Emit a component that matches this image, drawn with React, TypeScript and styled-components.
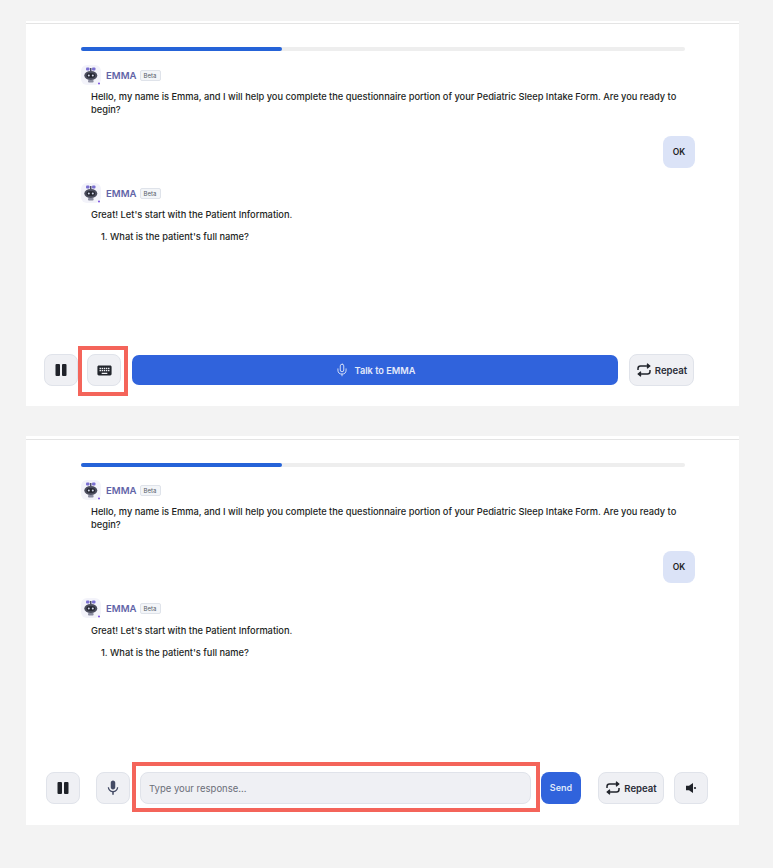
import styled, { createGlobalStyle } from 'styled-components';
import { Mic } from 'lucide-react';
import { MdKeyboard, MdMic } from 'react-icons/md';

const GlobalStyle = createGlobalStyle`
    html, body {
        margin: 0;
        padding: 0;
        background: #f3f3f3;
        font-family: Inter, "Open Sans", sans-serif;
    }
`;
const Page = styled.div`
    width: 773px;
    height: 868px;
    padding: 21px 34px 0 26px;
    box-sizing: border-box;
    display: flex;
    flex-direction: column;
    gap: 30px;
`;
const Panel = styled.section<{ $height: number; $lineTop: number }>`
    height: ${(props) => props.$height}px;
    background: #ffffff;
    padding-top: ${(props) => props.$lineTop}px;
    box-sizing: border-box;
    display: flex;
    flex-direction: column;
    &::before {
        content: '';
        display: block;
        height: 1px;
        background: #e4e4e4;
        flex: none;
    }
`;
const Track = styled.div`
    margin: 23px 54px 0 55px;
    height: 4px;
    border-radius: 2px;
    background: #eeeeee;
    flex: none;
`;
const Fill = styled.div`
    width: 201px;
    height: 100%;
    border-radius: 2px;
    background: #2563d8;
`;
const Chat = styled.div<{ $top: number }>`
    flex: 1;
    padding: ${(props) => props.$top}px 44px 0 55px;
`;
const Head = styled.div`
    display: flex;
    align-items: center;
    height: 20px;
`;
const Name = styled.span`
    margin-left: 5px;
    font-size: 9.6px;
    font-weight: 600;
    color: #6264a7;
`;
const Badge = styled.span`
    margin-left: 3px;
    height: 11px;
    width: 21px;
    box-sizing: border-box;
    border: 1px solid #dfe3ea;
    border-radius: 2px;
    background: #f3f5f8;
    font-size: 6px;
    line-height: 9px;
    text-align: center;
    color: #555b68;
`;
const Text = styled.p<{ $mt?: number }>`
    margin: ${(props) => props.$mt || 5}px 0 0 10px;
    width: 600px;
    font-size: 9.28px;
    line-height: 13px;
    font-weight: 500;
    color: #1d1f24;
`;
const ListText = styled(Text)`
    margin: 9px 0 0 20px;
`;
const BubbleRow = styled.div`
    display: flex;
    justify-content: flex-end;
    margin: 20px 0 15px;
`;
const Bubble = styled.div`
    width: 32px;
    height: 32px;
    border-radius: 8px;
    background: #dbe3f7;
    font-size: 8.5px;
    font-weight: 600;
    line-height: 32px;
    text-align: center;
    color: #1d1f24;
`;
const Bar = styled.div<{ $left: number; $bottom: number }>`
    flex: none;
    height: 50px;
    margin-bottom: ${(props) => props.$bottom}px;
    padding-left: ${(props) => props.$left}px;
    display: flex;
    align-items: center;
`;
const IconButton = styled.div<{ $ml?: number }>`
    flex: none;
    width: 34px;
    height: 32px;
    margin-left: ${(props) => props.$ml || 0}px;
    box-sizing: border-box;
    border: 1px solid #e0e3ea;
    border-radius: 8px;
    background: #eff0f4;
    display: flex;
    align-items: center;
    justify-content: center;
    color: #22252c;
`;
// the red annotation box sits 1px off the row centre, $shift moves it without moving its content
const Highlight = styled.div<{ $width: number; $ml: number; $pad: number; $shift: number }>`
    flex: none;
    width: ${(props) => props.$width}px;
    height: 50px;
    margin-left: ${(props) => props.$ml}px;
    margin-top: ${(props) => (props.$shift > 0 ? 2 : 0)}px;
    margin-bottom: ${(props) => (props.$shift < 0 ? 2 : 0)}px;
    padding-left: ${(props) => props.$pad}px;
    padding-top: ${(props) => (props.$shift < 0 ? 2 : 0)}px;
    padding-bottom: ${(props) => (props.$shift > 0 ? 2 : 0)}px;
    box-sizing: border-box;
    border: 4px solid #f4645a;
    display: flex;
    align-items: center;
`;
const TalkButton = styled.div`
    flex: none;
    width: 486px;
    height: 30px;
    margin-left: 4px;
    border-radius: 7px;
    background: #3063dc;
    display: flex;
    align-items: center;
    justify-content: center;
    gap: 6px;
    font-size: 9.2px;
    font-weight: 600;
    color: #e4eafa;
`;
const RepeatButton = styled.div<{ $ml: number; $width: number }>`
    flex: none;
    width: ${(props) => props.$width}px;
    height: 32px;
    margin-left: ${(props) => props.$ml}px;
    box-sizing: border-box;
    border: 1px solid #e0e3ea;
    border-radius: 8px;
    background: #eff0f4;
    display: flex;
    align-items: center;
    justify-content: center;
    gap: 3px;
    font-size: 9.6px;
    font-weight: 600;
    color: #2a2d38;
`;
const ResponseInput = styled.input`
    width: 391px;
    height: 32px;
    padding: 0 8px;
    box-sizing: border-box;
    border: 1px solid #e0e3ea;
    border-radius: 8px;
    background: #eff0f4;
    outline: 0;
    font-family: Inter, sans-serif;
    font-size: 9.5px;
    &::placeholder {
        color: #6b6e78;
        opacity: 1;
    }
`;
const SendButton = styled.div`
    flex: none;
    width: 40px;
    height: 32px;
    margin-left: 1px;
    border-radius: 8px;
    background: #3063dc;
    font-size: 9px;
    font-weight: 600;
    line-height: 32px;
    text-align: center;
    color: #dfe7fa;
`;

const PauseIcon = () => (
    <svg width="12" height="12" viewBox="0 0 12 12">
        <rect x="0.5" y="0" width="4.5" height="12" rx="1" fill="#1f2229" />
        <rect x="7" y="0" width="4.5" height="12" rx="1" fill="#1f2229" />
    </svg>
);
const RepeatIcon = () => (
    <svg width="16" height="14" viewBox="0 0 16 14" fill="none" stroke="#22252c" strokeWidth="1.5">
        <path d="M2 7V5.5C2 4 3 3 4.5 3H13" />
        <path d="M11 0.8L13.6 3L11 5.2" fill="#22252c" />
        <path d="M14 7V8.5C14 10 13 11 11.5 11H3" />
        <path d="M5 8.8L2.4 11L5 13.2" fill="#22252c" />
    </svg>
);
const SpeakerIcon = () => (
    <svg width="14" height="14" viewBox="0 0 14 14">
        <path d="M2 4.8H5L9 2V12L5 9.2H2Z" fill="#1f2229" />
        <circle cx="11" cy="7" r="1.1" fill="#1f2229" />
    </svg>
);
const RobotIcon = () => (
    <svg width="20" height="20" viewBox="0 0 20 20">
        <rect width="20" height="20" rx="6" fill="#f3f3fa" />
        <rect x="5" y="2.5" width="3.5" height="3" rx="1" fill="#7a6fd0" />
        <rect x="11" y="2.5" width="3.5" height="3" rx="1" fill="#7a6fd0" />
        <rect x="9" y="3" width="1.5" height="3" fill="#4a4a68" />
        <ellipse cx="9.8" cy="10.5" rx="6.5" ry="4.5" fill="#4b4d5e" />
        <rect x="5.5" y="8.2" width="8.6" height="4.6" rx="2.3" fill="#23252f" />
        <circle cx="7.8" cy="10.5" r="1" fill="#d8dcf0" />
        <circle cx="11.8" cy="10.5" r="1" fill="#d8dcf0" />
        <rect x="7" y="15" width="5.6" height="2.5" rx="1" fill="#8a8ca0" />
        <circle cx="18" cy="18.5" r="1" fill="#7a4fe0" />
    </svg>
);

const Conversation = ({ top, replyGap }: { top: number; replyGap: number }) => (
    <>
        <Track><Fill /></Track>
        <Chat $top={top}>
            <Head><RobotIcon /><Name>EMMA</Name><Badge>Beta</Badge></Head>
            <Text>Hello, my name is Emma, and I will help you complete the questionnaire portion of your Pediatric Sleep Intake Form. Are you ready to begin?</Text>
            <BubbleRow><Bubble>OK</Bubble></BubbleRow>
            <Head><RobotIcon /><Name>EMMA</Name><Badge>Beta</Badge></Head>
            <Text $mt={replyGap}>Great! Let's start with the Patient Information.</Text>
            <ListText>1. What is the patient's full name?</ListText>
        </Chat>
    </>
);

const App = () => {
    return (
        <Page>
            <GlobalStyle />
            <Panel $height={385} $lineTop={2}>
                <Conversation top={14} replyGap={5} />
                <Bar $left={18} $bottom={11}>
                    <IconButton><PauseIcon /></IconButton>
                    <Highlight $width={50} $ml={0} $pad={5} $shift={1}>
                        <IconButton><MdKeyboard size={17} /></IconButton>
                    </Highlight>
                    <TalkButton><Mic size={14} strokeWidth={1.5} />Talk to EMMA</TalkButton>
                    <RepeatButton $ml={11} $width={65}><RepeatIcon />Repeat</RepeatButton>
                </Bar>
            </Panel>
            <Panel $height={389} $lineTop={3}>
                <Conversation top={13} replyGap={6} />
                <Bar $left={20} $bottom={12}>
                    <IconButton><PauseIcon /></IconButton>
                    <IconButton $ml={16}><MdMic size={18} color="#434a64" /></IconButton>
                    <Highlight $width={408} $ml={2} $pad={4} $shift={-1}>
                        <ResponseInput placeholder="Type your response..." />
                    </Highlight>
                    <SendButton>Send</SendButton>
                    <RepeatButton $ml={17} $width={66}><RepeatIcon />Repeat</RepeatButton>
                    <IconButton $ml={10}><SpeakerIcon /></IconButton>
                </Bar>
            </Panel>
        </Page>
    );
};

export default App;
